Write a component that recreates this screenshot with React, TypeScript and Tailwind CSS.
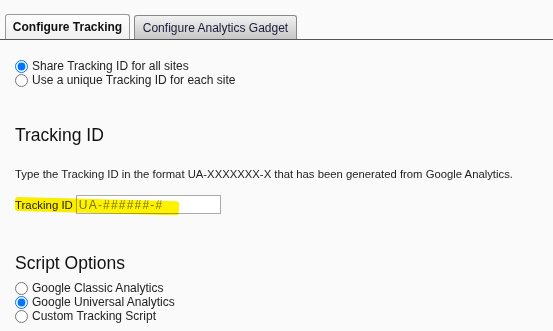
export default function App() {
  return (
    <div className="w-[553px] h-[331px] bg-[#fafafa] font-['Liberation_Sans',Arial,sans-serif] text-[#222] overflow-hidden">
      {/* Tabs */}
      <div className="h-[40px] pl-[5px] flex items-end gap-[4px] border-b border-[#555]">
        <div className="h-[25px] w-[125px] flex items-center justify-center border border-[#999] border-b-0 rounded-t-[3px] bg-gradient-to-b from-[#fdfdfd] to-[#f0f0f0] font-bold text-[12px] text-[#111]">
          Configure Tracking
        </div>
        <div className="h-[24px] w-[163px] flex items-center justify-center border border-[#888] border-b-0 rounded-t-[3px] bg-gradient-to-b from-[#f2f2f2] to-[#c6c6c6] text-[12px] text-[#1a1a3a]">
          Configure Analytics Gadget
        </div>
      </div>

      <div className="pl-[15px] pt-[19px] flex flex-col text-[12px]">
        <label className="flex items-center h-[14px] gap-[4px]">
          <input type="radio" name="share" defaultChecked className="m-0 w-[13px] h-[13px]" />
          Share Tracking ID for all sites
        </label>
        <label className="flex items-center h-[14px] gap-[4px]">
          <input type="radio" name="share" className="m-0 w-[13px] h-[13px]" />
          Use a unique Tracking ID for each site
        </label>
      </div>

      <div className="pl-[15px]">
        <h2 className="text-[17.5px] mt-[38px] leading-[20px] text-[#111]">Tracking ID</h2>
        <p className="mt-[22px] leading-[14px] text-[11.3px]">
          Type the Tracking ID in the format UA-XXXXXXX-X that has been generated from Google Analytics.
        </p>
        <div className="mt-[14px] flex items-center relative text-[11.4px]">
          <span className="leading-[14px]">Tracking ID</span>
          <input
            placeholder="UA-######-#"
            className="ml-[3px] w-[145px] h-[19px] border border-[#aaa] bg-white px-[2px] text-[12px] outline-none placeholder:text-[#7a7a7a] tracking-[1.2px]"
          />
          <div className="absolute left-0 top-[2px] w-[164px] h-[14px] bg-[#fff200] mix-blend-multiply rotate-[1.5deg] origin-left rounded-[3px]" />
        </div>

        <h2 className="text-[17.5px] mt-[39px] leading-[20px] text-[#111]">Script Options</h2>
      </div>
      <div className="pl-[15px] pt-[8px] flex flex-col text-[12px]">
        <label className="flex items-center h-[14px] gap-[4px]">
          <input type="radio" name="script" className="m-0 w-[13px] h-[13px]" />
          Google Classic Analytics
        </label>
        <label className="flex items-center h-[14px] gap-[4px]">
          <input type="radio" name="script" defaultChecked className="m-0 w-[13px] h-[13px]" />
          Google Universal Analytics
        </label>
        <label className="flex items-center h-[14px] gap-[4px]">
          <input type="radio" name="script" className="m-0 w-[13px] h-[13px]" />
          Custom Tracking Script
        </label>
      </div>
    </div>
  );
}
